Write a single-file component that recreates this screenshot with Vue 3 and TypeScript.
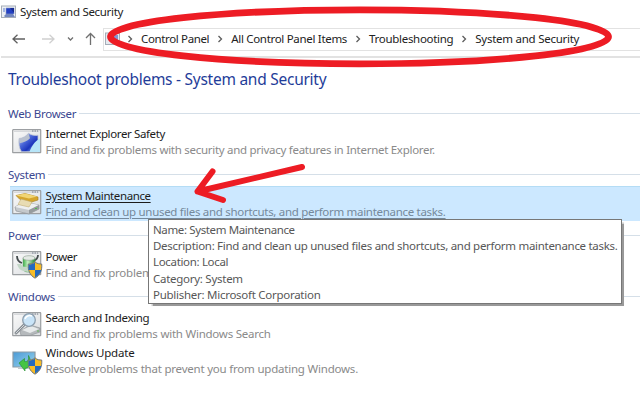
<script setup lang="ts">
interface Entry {
  icon: string
  title: string
  titleTracking: number
  description: string
  tracking: number
  selected?: boolean
  shield?: boolean
}
interface Group {
  label: string
  entries: Entry[]
}
interface Line {
  text: string
  tracking: number
}

const crumbs: Line[] = [
  { text: 'Control Panel', tracking: -0.36 },
  { text: 'All Control Panel Items', tracking: -0.31 },
  { text: 'Troubleshooting', tracking: -0.3 },
  { text: 'System and Security', tracking: -0.26 },
]

const groups: Group[] = [
  {
    label: 'Web Browser',
    entries: [
      { icon: 'browser', title: 'Internet Explorer Safety', titleTracking: -0.38, description: 'Find and fix problems with security and privacy features in Internet Explorer.', tracking: -0.28 },
    ],
  },
  {
    label: 'System',
    entries: [
      { icon: 'maintenance', title: 'System Maintenance', titleTracking: -0.4, description: 'Find and clean up unused files and shortcuts, and perform maintenance tasks.', tracking: -0.3, selected: true },
    ],
  },
  {
    label: 'Power',
    entries: [
      { icon: 'power', title: 'Power', titleTracking: -0.5, description: 'Find and fix problem', tracking: -0.23, shield: true },
    ],
  },
  {
    label: 'Windows',
    entries: [
      { icon: 'search', title: 'Search and Indexing', titleTracking: -0.36, description: 'Find and fix problems with Windows Search', tracking: -0.235 },
      { icon: 'update', title: 'Windows Update', titleTracking: -0.2, description: 'Resolve problems that prevent you from updating Windows.', tracking: -0.21, shield: true },
    ],
  },
]

const details: Line[] = [
  { text: 'Name: System Maintenance', tracking: -0.38 },
  { text: 'Description: Find and clean up unused files and shortcuts, and perform maintenance tasks.', tracking: -0.295 },
  { text: 'Location: Local', tracking: -0.33 },
  { text: 'Category: System', tracking: -0.27 },
  { text: 'Publisher: Microsoft Corporation', tracking: -0.27 },
]
</script>

<template>
  <div class="window">
    <svg class="defs" width="0" height="0">
      <defs>
        <linearGradient id="blueGlass" x1="0" y1="0" x2="1" y2="1">
          <stop offset="0" stop-color="#eef2fa" />
          <stop offset="0.4" stop-color="#4b67d8" />
          <stop offset="0.65" stop-color="#1c35bd" />
          <stop offset="1" stop-color="#a4d8f5" />
        </linearGradient>
        <linearGradient id="steel" x1="0" y1="0" x2="1" y2="1">
          <stop offset="0" stop-color="#fafafa" />
          <stop offset="1" stop-color="#d9dcdf" />
        </linearGradient>
        <linearGradient id="screen" x1="0" y1="0" x2="1" y2="1">
          <stop offset="0" stop-color="#4b9ad6" />
          <stop offset="1" stop-color="#9ad6ee" />
        </linearGradient>
        <linearGradient id="cell" x1="0" y1="0" x2="1" y2="0">
          <stop offset="0" stop-color="#3dae48" />
          <stop offset="0.4" stop-color="#c5efc1" />
          <stop offset="1" stop-color="#218b37" />
        </linearGradient>
      </defs>
    </svg>

    <header class="titlebar">
      <svg class="app-icon" width="15" height="14" viewBox="0 0 15 14">
        <rect x="0.5" y="1" width="14" height="11.5" fill="#edf0f4" stroke="#a5adb8" />
        <path d="M5 3h8v6H5z" fill="#2340c2" stroke="#8d9cc8" stroke-width=".6" />
        <path d="M9 3h4v5z" fill="#152a91" />
        <path d="M2 4h2M2 6h2" stroke="#5d7dd0" />
        <path d="M3 11l2-2h7l2 3H4z" fill="#7286bd" />
      </svg>
      <span>System and Security</span>
    </header>

    <nav class="navbar">
      <svg class="arrows" width="103" height="24" viewBox="0 0 103 24">
        <g fill="none" stroke-width="1.3">
          <path d="M13 12h12M17.5 7.8L13 12l4.5 4.2" stroke="#606060" />
          <path d="M42 12h12M49.5 7.8L54 12l-4.5 4.2" stroke="#d0d0d0" />
          <path d="M68 10.5l2.5 2.5 2.5-2.5" stroke="#707070" />
          <path d="M90.5 18V6.500M86 11l4.500-4.500 4.500 4.500" stroke="#707070" />
        </g>
      </svg>
      <div class="address">
        <svg class="place" width="15" height="14" viewBox="0 0 15 14">
          <rect x="0.5" y="1" width="14" height="11.5" fill="#e6e9ef" stroke="#a5adb8" />
          <path d="M5 3h8v7H5z" fill="#8196d2" />
        </svg>
        <template v-for="crumb in crumbs" :key="crumb.text">
          <svg class="chevron" width="6" height="8" viewBox="0 0 6 8">
            <path d="M1.5 1l3 3-3 3" fill="none" stroke="#5c5c5c" stroke-width="1.3" />
          </svg>
          <span class="crumb" :style="{ letterSpacing: crumb.tracking + 'px' }">{{ crumb.text }}</span>
        </template>
      </div>
    </nav>

    <main>
      <h1><span>Troubleshoot problems - System and Security</span></h1>

      <section v-for="group in groups" :key="group.label" class="group">
        <h2>{{ group.label }}</h2>
        <div v-for="entry in group.entries" :key="entry.title" class="entry" :class="{ selected: entry.selected }">
          <svg class="entry-icon" width="31" height="28" viewBox="0 0 31 28">
            <g v-if="entry.icon !== 'update'">
              <rect x="0.7" y="0.7" width="28" height="23" rx="0.5" fill="url(#steel)" stroke="#9c9fa2" stroke-width="1.2" />
              <path d="M2 2.5h25" stroke="#d7d9dc" />
              <path d="M20 2h6" stroke="#777f8b" stroke-dasharray="1.5 1" />
            </g>
            <g v-if="entry.icon === 'browser'">
              <path d="M16.500 4.200c3 2 6 2.500 9.500 2v16.500H9.500C7 19 6.500 14 7 9.500c4-.5 7-2 9.500-5.300z" fill="url(#blueGlass)" stroke="#c2c8d4" stroke-width=".8" />
              <path d="M28 9.500v13.500H17.500c2-6 5-10.500 10.500-13.500z" fill="#b7e5f8" />
              <path d="M7 9.500c4-.5 7-2 9.500-5.300l1.500 5c-3 3-6 4-10.500 5z" fill="#b9c1cf" />
            </g>
            <g v-else-if="entry.icon === 'maintenance'">
              <path d="M3 17l9-5 15 3v4l-10 5-13-3z" fill="#c5c9cc" stroke="#90959a" stroke-width=".7" />
              <path d="M3 17l9-5 15 3-10 5z" fill="#eef0f1" />
              <path d="M17 20v4l10-5v-4z" fill="#969b9d" />
              <path d="M23 18.500h2" stroke="#50be4d" />
              <path d="M4 5.500l9-2 13 3.500v3l-8 2.500-10-3z" fill="#d5a52d" stroke="#a67d1d" stroke-width=".6" />
              <path d="M4 5.500l9-2 12 3-8 2z" fill="#f1d574" />
              <path d="M9 9l-3 5.500 11 2.500 3-5z" fill="#e8dcb3" stroke="#bba566" stroke-width=".5" />
            </g>
            <g v-else-if="entry.icon === 'power'">
              <path d="M5 5c0 4 2 6 5 7M26 4c0 4-2 5-5 6" fill="none" stroke="#454c4e" stroke-width="1.8" />
              <path d="M11 7v12c3 3 9 3 12 0V7z" fill="url(#cell)" stroke="#6b9a73" stroke-width=".5" />
              <ellipse cx="17" cy="7" rx="6" ry="2.3" fill="#e4eae5" stroke="#8a9b8c" stroke-width=".6" />
              <path d="M5 13c2 6 5 8 12 7v-4c-4 0-7 0-8-3z" fill="#c3d7c7" />
            </g>
            <g v-else-if="entry.icon === 'search'">
              <path d="M8 19l10-6 10 3v4l-10 3.500H9z" fill="#b5b9bc" stroke="#8a8f92" stroke-width=".6" />
              <path d="M10 18l9-4 8 3-9 4z" fill="#e7eaeb" />
              <path d="M25 19h2" stroke="#5aae50" />
              <path d="M12 13L4 21" stroke="#878d93" stroke-width="3" stroke-linecap="round" />
              <path d="M12 13L4 21" stroke="#d4d8db" stroke-width="1" stroke-linecap="round" />
              <circle cx="17" cy="8" r="6.300" fill="#c9e4f8" stroke="#8d9ead" stroke-width="1.300" />
              <path d="M13 7c1-3 4-4 7-3" fill="none" stroke="#fff" stroke-width="1.500" />
            </g>
            <g v-else-if="entry.icon === 'update'">
              <path d="M1 5h22v15H1z" fill="url(#screen)" stroke="#8b9ba5" stroke-width="1.200" />
              <path d="M6 20h11v2H6z" fill="#c1c9cc" />
              <path d="M7 16l5.500-4.500v3c3 .5 4.500-1 4-6 3.500 7 2.500 12-3.500 13v2.500z" fill="#45c443" stroke="#1f8d2c" stroke-width=".6" />
            </g>
            <g v-if="entry.shield">
              <path d="M23 10.800c2 2 4.500 2.300 6.700 2.200.5 6-1.200 11-6.700 14.200-5.500-3.200-7.200-8.200-6.700-14.200 2.200.1 4.700-.2 6.700-2.200z" fill="#f8bd27" stroke="#70777d" stroke-width="1" />
              <path d="M23 11.500V19h-6.300c-.2-1.700-.2-3.500 0-5.500 2.300 0 4.300-.5 6.300-2z M23 19h6.300c-.8 3.300-2.800 5.700-6.300 7.600z" fill="#2469be" />
            </g>
          </svg>
          <div class="entry-text">
            <div class="title"><span :style="{ letterSpacing: entry.titleTracking + 'px' }">{{ entry.title }}</span></div>
            <div class="description"><span :style="{ letterSpacing: entry.tracking + 'px' }">{{ entry.description }}</span></div>
          </div>
        </div>
      </section>
    </main>

    <aside class="tooltip">
      <div v-for="line in details" :key="line.text" :style="{ letterSpacing: line.tracking + 'px' }">{{ line.text }}</div>
    </aside>

    <svg class="markup" width="640" height="404" viewBox="0 0 640 404">
      <g fill="none" stroke="#ed1c24" stroke-linecap="round" stroke-linejoin="round">
        <ellipse cx="359.5" cy="36.800" rx="249" ry="27" stroke-width="6.800" />
        <path d="M302 167L197.500 191.500L212.500 171.500M197.500 191.500L223 200" stroke-width="6" />
      </g>
    </svg>
  </div>
</template>

<style>
body {
  margin: 0;
  background: #fff;
}
</style>

<style scoped>
.window {
  position: relative;
  width: 640px;
  height: 404px;
  overflow: hidden;
  background: #fff;
  color: #222;
  font: 11.5px/16px "Noto Sans", "Open Sans", sans-serif;
  letter-spacing: -0.3px;
  white-space: nowrap;
}
.defs {
  position: absolute;
}
.titlebar {
  display: flex;
  align-items: center;
  gap: 4px;
  height: 24px;
  padding-left: 1px;
}
.navbar {
  display: flex;
  align-items: center;
  height: 32px;
  margin-left: 1px;
  border-bottom: 2px solid #e2e2e2;
}
.arrows {
  flex: none;
  width: 103px;
  margin-left: -1px;
  margin-top: -2px;
}
.address {
  display: flex;
  align-items: center;
  flex: 1;
  height: 21px;
  margin-top: -2px;
  padding-left: 1px;
  border: 1px solid #e2e2e2;
  border-right: 0;
}
.place {
  margin-right: 7px;
}
.chevron {
  flex: none;
  margin-right: 8px;
}
.crumb {
  margin-right: 8px;
}
h1 {
  height: 45px;
  margin: 0;
  padding-left: 8px;
  color: #1f3d99;
  font-size: 15.5px;
  font-weight: 400;
  letter-spacing: -0.26px;
  line-height: 42px;
}
.group {
  margin-bottom: 4px;
}
h2 {
  display: flex;
  align-items: center;
  gap: 3px;
  height: 22px;
  margin: 0;
  padding-left: 8px;
  color: #3a4790;
  font-size: 11.5px;
  font-weight: 400;
}
h2::after {
  content: "";
  flex: 1;
  height: 1px;
  margin-top: -2px;
  background: #d5dfe8;
}
.entry {
  display: flex;
  box-sizing: border-box;
  height: 35px;
  margin-left: 10px;
  padding-left: 2px;
}
.entry-icon {
  flex: none;
  margin: 4px 2.5px 0 0;
}
.entry-text {
  padding-top: 2px;
}
.group:first-of-type .entry-text {
  padding-top: 1px;
}
.title {
  color: #1c1c1c;
}
.description {
  color: #8a8a8a;
}
.selected {
  background: #cce8ff;
  border-top: 1px solid #b4dcf5;
}
.selected .entry-icon {
  margin-top: 3px;
}
.selected .entry-text {
  padding-top: 1px;
}
.selected span {
  text-decoration: underline;
  text-underline-offset: 1.5px;
}
.selected .description {
  color: #75899b;
}
.tooltip {
  position: absolute;
  left: 148px;
  top: 219px;
  box-sizing: border-box;
  width: 474px;
  height: 85px;
  padding: 2px 0 0 4px;
  border: 1px solid #777;
  background: #fff;
  box-shadow: 2px 2px 1px -0.5px #999;
  color: #575757;
  line-height: 16.2px;
}
.markup {
  position: absolute;
  inset: 0;
  pointer-events: none;
}
</style>
